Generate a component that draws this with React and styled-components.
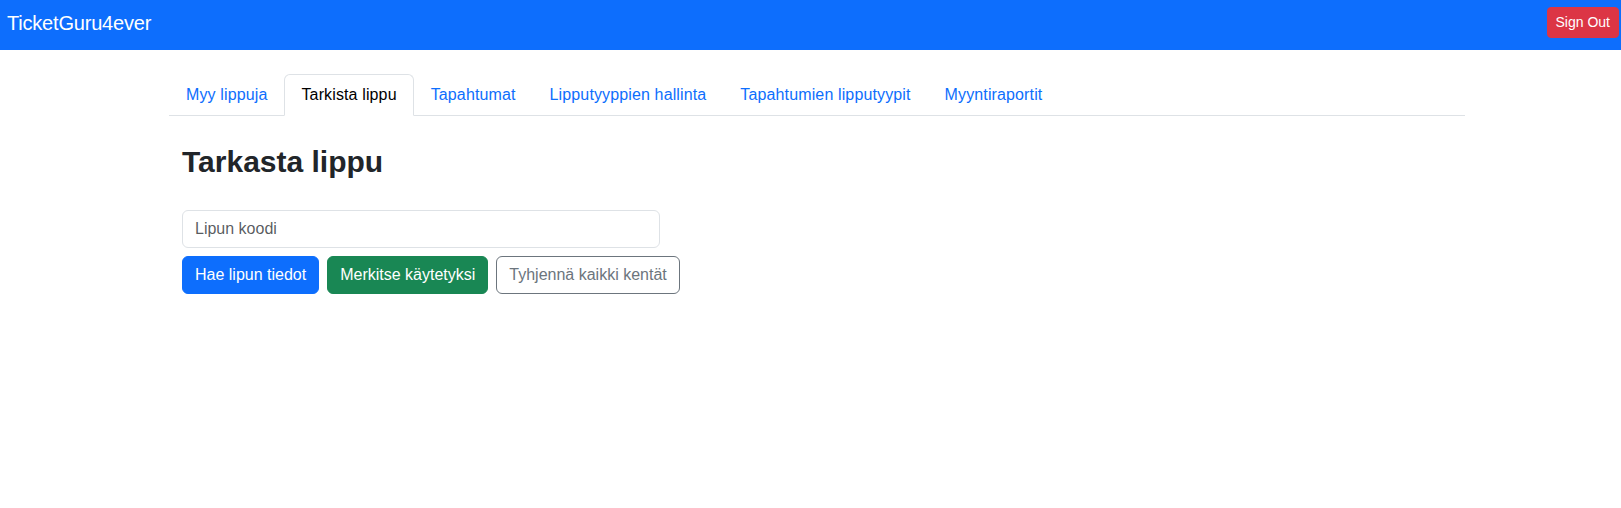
import React from "react";
import styled, { createGlobalStyle } from "styled-components";

const GlobalStyle = createGlobalStyle`
  html, body {
    margin: 0;
    padding: 0;
    background: #fff;
  }
  body {
    font-family: "Liberation Sans", Arial, sans-serif;
    font-size: 16px;
    line-height: 1.5;
    color: #212529;
  }
  * { box-sizing: border-box; }
`;

const Navbar = styled.header`
  display: flex;
  align-items: center;
  justify-content: space-between;
  height: 50px;
  padding: 7px 2px 12px 7px;
  background: #0d6efd;
`;

const Brand = styled.a`
  color: #fff;
  font-size: 20px;
  line-height: 30px;
  letter-spacing: -0.2px;
  text-decoration: none;
`;

const SignOutButton = styled.button`
  font-family: inherit;
  font-size: 14px;
  line-height: 21px;
  padding: 4px 8px;
  border: 1px solid #dc3545;
  border-radius: 4px;
  background: #dc3545;
  color: #fff;
  cursor: pointer;
`;

const Container = styled.main`
  width: 1296px;
  margin: 24px 0 0 169px;
`;

const Tabs = styled.ul`
  display: flex;
  list-style: none;
  margin: 0;
  padding: 0;
  border-bottom: 1px solid #dee2e6;
`;

const TabItem = styled.li`
  margin-bottom: -1px;
`;

const TabLink = styled.a`
  display: block;
  padding: 8px 16px;
  font-size: 16px;
  line-height: 24px;
  letter-spacing: 0.13px;
  text-decoration: none;
  border: 1px solid transparent;
  border-top-left-radius: 6px;
  border-top-right-radius: 6px;
  color: ${(p) => (p.$active ? "#000" : "#0d6efd")};
  background: ${(p) => (p.$active ? "#fff" : "transparent")};
  border-color: ${(p) =>
    p.$active ? "#dee2e6 #dee2e6 #fff" : "transparent"};
  cursor: pointer;
`;

const Content = styled.section`
  padding: 0 13px;
`;

const Title = styled.h2`
  margin: 28px 0 30px;
  font-size: 30px;
  font-weight: 700;
  line-height: 1.2;
  color: #212529;
`;

const CodeInput = styled.input`
  display: block;
  width: 478px;
  height: 38px;
  padding: 6px 12px;
  font-family: inherit;
  font-size: 16px;
  line-height: 24px;
  color: #212529;
  border: 1px solid #dee2e6;
  border-radius: 6px;
  outline: none;
  &::placeholder {
    color: rgba(33, 37, 41, 0.75);
  }
`;

const ButtonRow = styled.div`
  display: flex;
  gap: 8px;
  margin-top: 8px;
`;

const variants = {
  primary: { bg: "#0d6efd", border: "#0d6efd", color: "#fff" },
  success: { bg: "#198754", border: "#198754", color: "#fff" },
  outline: { bg: "#fff", border: "#6c757d", color: "#6c757d" },
};

const ActionButton = styled.button`
  font-family: inherit;
  font-size: 16px;
  line-height: 24px;
  padding: 6px 12px;
  border-radius: 6px;
  border: 1px solid ${(p) => variants[p.$variant].border};
  background: ${(p) => variants[p.$variant].bg};
  color: ${(p) => variants[p.$variant].color};
  cursor: pointer;
`;

const tabs = [
  "Myy lippuja",
  "Tarkista lippu",
  "Tapahtumat",
  "Lipputyyppien hallinta",
  "Tapahtumien lipputyypit",
  "Myyntiraportit",
];

export default function App() {
  return (
    <>
      <GlobalStyle />
      <Navbar>
        <Brand>TicketGuru4ever</Brand>
        <SignOutButton>Sign Out</SignOutButton>
      </Navbar>
      <Container>
        <Tabs>
          {tabs.map((t) => (
            <TabItem key={t}>
              <TabLink $active={t === "Tarkista lippu"}>{t}</TabLink>
            </TabItem>
          ))}
        </Tabs>
        <Content>
          <Title>Tarkasta lippu</Title>
          <CodeInput placeholder="Lipun koodi" />
          <ButtonRow>
            <ActionButton $variant="primary">Hae lipun tiedot</ActionButton>
            <ActionButton $variant="success">Merkitse käytetyksi</ActionButton>
            <ActionButton $variant="outline">Tyhjennä kaikki kentät</ActionButton>
          </ButtonRow>
        </Content>
      </Container>
    </>
  );
}
